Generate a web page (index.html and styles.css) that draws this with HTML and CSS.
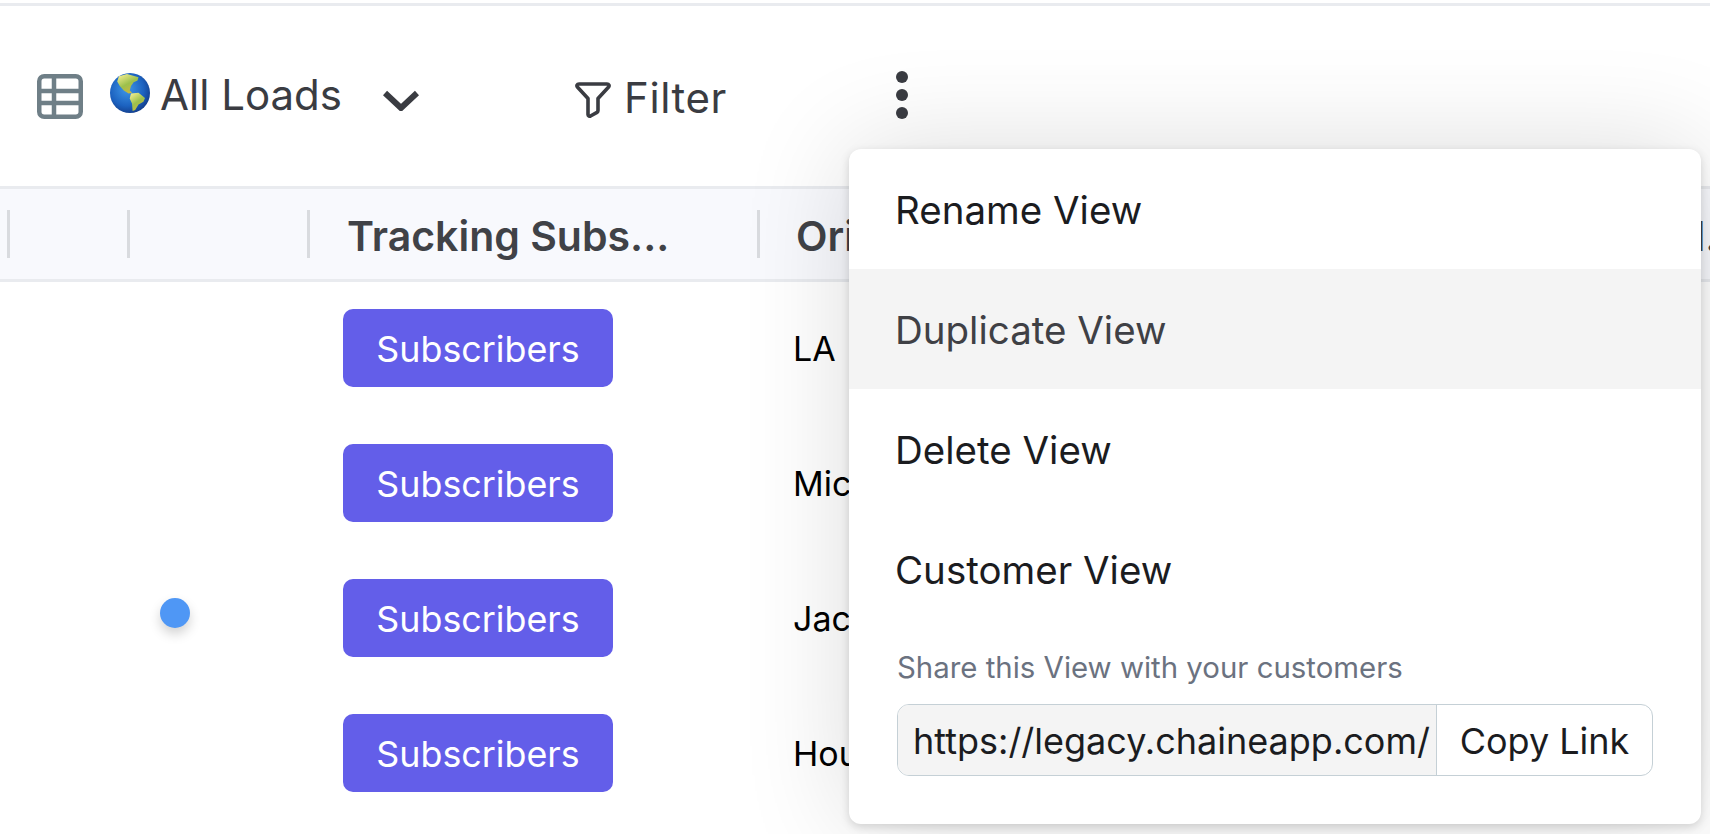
FILE: index.html
```html
<!DOCTYPE html>
<html>
  <head>
    <title>All Loads</title>
    <link rel="stylesheet" href="styles.css">
  </head>
  <body>
    <div class="toolbar">
      <svg class="icon-table" viewBox="0 0 46 45" width="46" height="45">
        <rect x="2.25" y="2.25" width="41.5" height="40.5" rx="5" fill="none" stroke="#6f7f87" stroke-width="4.5" />
        <path d="M2 17H44M2 29H44M17 2V43" fill="none" stroke="#6f7f87" stroke-width="4.5" />
      </svg>
      <svg class="icon-globe" viewBox="0 0 40 40" width="40" height="40">
        <defs>
          <radialGradient id="sea" cx="0.42" cy="0.4" r="0.65">
            <stop offset="0" stop-color="#3f97e8" />
            <stop offset="0.65" stop-color="#1c62c0" />
            <stop offset="1" stop-color="#123a86" />
          </radialGradient>
          <linearGradient id="land" x1="0.2" y1="0" x2="0.8" y2="1">
            <stop offset="0" stop-color="#f0ec8e" />
            <stop offset="0.5" stop-color="#9cc04c" />
            <stop offset="1" stop-color="#d9b63a" />
          </linearGradient>
        </defs>
        <circle cx="20" cy="20" r="20" fill="url(#sea)" />
        <path d="M8.9 3.3 17 1 28.5 4.3 27.5 7.5 23.6 9.2 21 13.1 19.7 17.4 22 19.7 18.7 20.6 13.8 17.4 9.8 13.1 7.2 8.5Z" fill="url(#land)" />
        <path d="M21 20.6 28.5 19.7 35 24.9 33.4 28.8 28.5 31.4 25.2 37 22.6 38 22 30.5 19.7 25.6Z" fill="url(#land)" />
      </svg>
      <span class="view-name">All Loads</span>
      <svg class="icon-chevron" viewBox="0 0 36 21" width="36" height="21">
        <path d="M2 3 18 18 34 3" fill="none" stroke="#3a3c42" stroke-width="6" />
      </svg>
      <svg class="icon-filter" viewBox="0 0 36 36" width="36" height="36">
        <path d="M4 2H32C34 2 34.6 3.6 33.6 5L23 16.5V28.5C23 29.5 22.6 30 22 30.4L15.5 34C14.2 34.6 13 34 13 32.5V16.5L2.4 5C1.4 3.6 2 2 4 2Z" fill="none" stroke="#3a3c42" stroke-width="3.6" stroke-linejoin="round" />
      </svg>
      <span class="filter-label">Filter</span>
      <div class="more">
        <span></span>
        <span></span>
        <span></span>
      </div>
    </div>

    <div class="table-head">
      <div class="head-cell cell-a"></div>
      <div class="head-cell cell-b"></div>
      <div class="head-cell cell-c"></div>
      <div class="head-cell cell-tracking">Tracking Subs...</div>
      <div class="head-cell cell-origin">Origin</div>
      <div class="head-cell cell-last">Final.</div>
    </div>

    <div class="table-row">
      <div class="cell-status"></div>
      <div class="cell-button"><button class="btn-subscribers">Subscribers</button></div>
      <div class="cell-city">LA</div>
    </div>
    <div class="table-row">
      <div class="cell-status"></div>
      <div class="cell-button"><button class="btn-subscribers">Subscribers</button></div>
      <div class="cell-city">Michigan</div>
    </div>
    <div class="table-row">
      <div class="cell-status"><span class="status-dot"></span></div>
      <div class="cell-button"><button class="btn-subscribers">Subscribers</button></div>
      <div class="cell-city">Jacksonville</div>
    </div>
    <div class="table-row">
      <div class="cell-status"></div>
      <div class="cell-button"><button class="btn-subscribers">Subscribers</button></div>
      <div class="cell-city">Houston</div>
    </div>

    <div class="view-menu">
      <div class="menu-item">Rename View</div>
      <div class="menu-item menu-item-active">Duplicate View</div>
      <div class="menu-item">Delete View</div>
      <div class="menu-item">Customer View</div>
      <div class="share">
        <div class="share-label">Share this View with your customers</div>
        <div class="share-box">
          <div class="share-url">https://legacy.chaineapp.com/</div>
          <div class="share-copy">Copy Link</div>
        </div>
      </div>
    </div>
  </body>
</html>
```

FILE: styles.css
```css
html,
body {
  height: 100%;
}
body {
  margin: 0;
  overflow: hidden;
  position: relative;
  background-color: #fff;
  font-family: Inter, "Noto Sans", sans-serif;
  border-top: 3px solid #fff;
}
.toolbar {
  display: flex;
  align-items: center;
  height: 183px;
  padding-left: 37px;
  border-top: 3px solid #e9ebef;
  box-sizing: border-box;
  color: #3a3c42;
}
.icon-table {
  margin-right: 27px;
}
.icon-globe {
  margin-right: 10px;
  margin-bottom: 7px;
}
.view-name {
  font-size: 42px;
  width: 223px;
  margin-bottom: 4px;
}
.icon-chevron {
  margin-right: 156px;
  margin-top: 8px;
}
.icon-filter {
  margin-right: 13px;
  margin-top: 8px;
}
.filter-label {
  font-size: 42px;
  letter-spacing: 0.6px;
  width: 272px;
  margin-top: 2px;
}
.more {
  display: flex;
  flex-direction: column;
  gap: 6px;
  margin-bottom: 2px;
}
.more span {
  display: block;
  width: 12px;
  height: 12px;
  border-radius: 50%;
  background-color: #3a3c42;
}
.table-head {
  display: flex;
  align-items: center;
  height: 96px;
  box-sizing: border-box;
  background-color: #f8f9fd;
  border-top: 3px solid #e9ebef;
  border-bottom: 3px solid #e9ebef;
  color: #404247;
  font-size: 41px;
  font-weight: 600;
  white-space: nowrap;
}
.head-cell {
  height: 48px;
  line-height: 52px;
  box-sizing: border-box;
  flex: none;
}
.cell-a {
  width: 7px;
}
.cell-b {
  width: 120px;
  border-left: 3px solid #d9dbdf;
}
.cell-c {
  width: 180px;
  border-left: 3px solid #d9dbdf;
}
.cell-tracking {
  width: 450px;
  padding-left: 37px;
  border-left: 3px solid #d9dbdf;
}
.cell-origin {
  width: 854px;
  padding-left: 36px;
  border-left: 3px solid #d9dbdf;
}
.table-row {
  display: flex;
  height: 135px;
  padding-top: 27px;
  box-sizing: border-box;
  color: #000;
  font-size: 34px;
}
.cell-status {
  width: 343px;
  padding: 19px 0 0 160px;
  box-sizing: border-box;
  flex: none;
}
.status-dot {
  display: block;
  width: 30px;
  height: 30px;
  border-radius: 50%;
  background-color: #4f97f5;
  box-shadow: 0 6px 12px rgba(0, 0, 0, 0.18);
}
.cell-button {
  width: 450px;
  flex: none;
}
.btn-subscribers {
  display: block;
  width: 270px;
  height: 78px;
  padding: 2px 0 0;
  border: none;
  border-radius: 10px;
  background-color: #635ee9;
  color: #fff;
  font-family: inherit;
  font-size: 35.8px;
}
.cell-city {
  line-height: 80px;
  white-space: nowrap;
}
.view-menu {
  position: absolute;
  left: 849px;
  top: 146px;
  width: 852px;
  height: 675px;
  box-sizing: border-box;
  background-color: #fff;
  border-radius: 12px;
  box-shadow: 0 3px 10px rgba(0, 0, 0, 0.15), 0 0 110px rgba(0, 0, 0, 0.14);
  overflow: hidden;
}
.menu-item {
  height: 120px;
  line-height: 122px;
  padding-left: 46px;
  color: #1b1c1f;
  font-size: 38.5px;
}
.menu-item-active {
  background-color: #f4f4f4;
  color: #3f4045;
}
.share {
  padding: 22px 48px 0 48px;
}
.share-label {
  height: 34px;
  line-height: 34px;
  margin-bottom: 19px;
  color: #6b7280;
  font-size: 29.4px;
}
.share-box {
  display: flex;
  height: 72px;
  box-sizing: border-box;
  border: 1px solid #c5d0d6;
  border-radius: 12px;
  overflow: hidden;
  color: #1b1c1f;
  font-size: 36px;
  line-height: 72px;
}
.share-url {
  width: 539px;
  padding-left: 15px;
  box-sizing: border-box;
  flex: none;
  overflow: hidden;
  white-space: nowrap;
  background-color: #f4f4f4;
  border-right: 1px solid #c5d0d6;
}
.share-copy {
  flex: 1;
  text-align: center;
}
```
